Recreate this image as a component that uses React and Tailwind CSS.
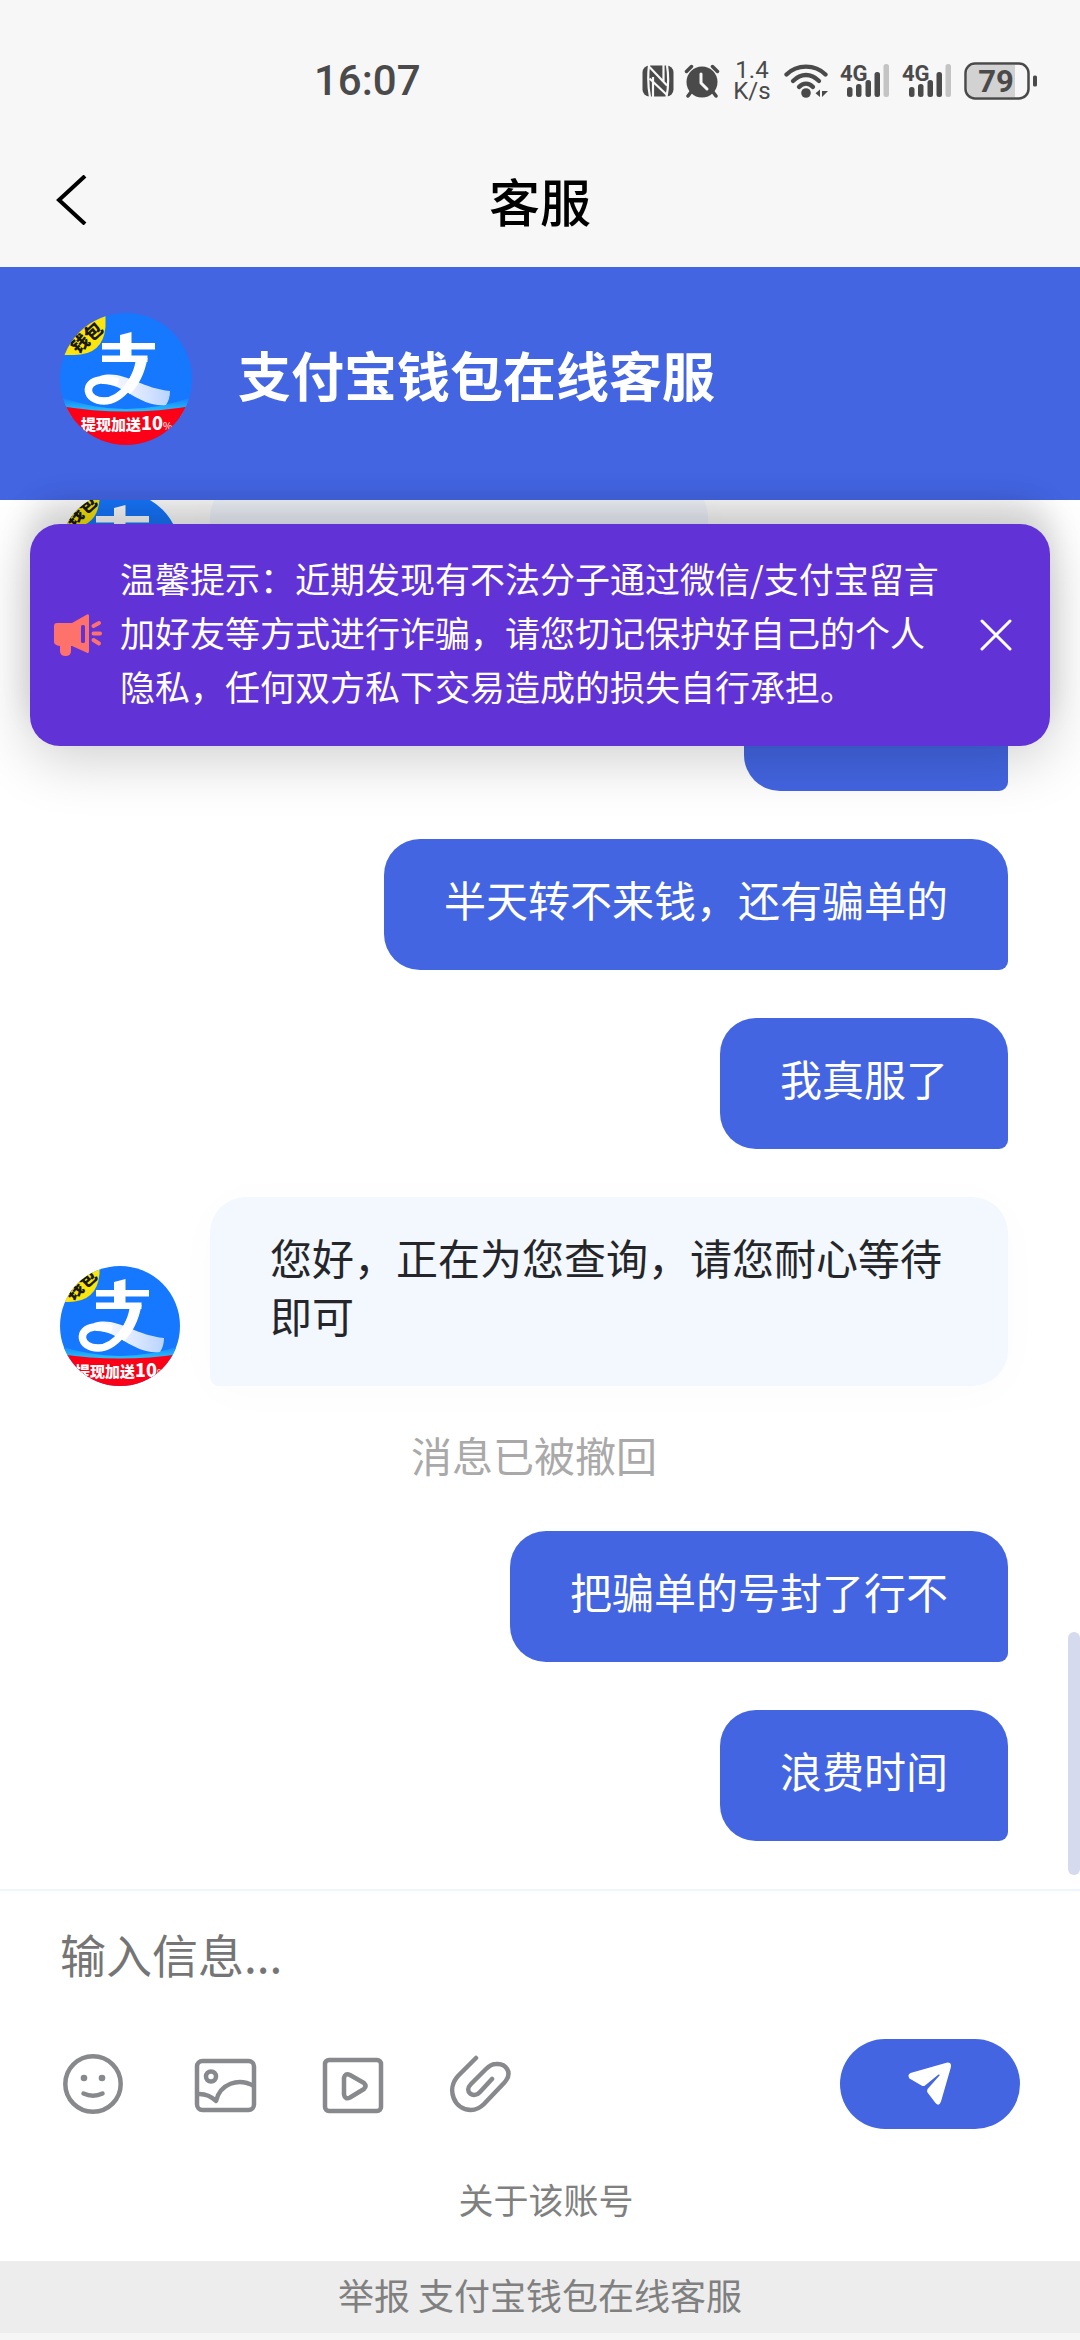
import React, { useState } from "react";

const messages = [
  { id: 1, from: "agent", text: "" },
  { id: 2, from: "me", text: "" },
  { id: 3, from: "me", text: "半天转不来钱，还有骗单的" },
  { id: 4, from: "me", text: "我真服了" },
  { id: 5, from: "agent", text: "您好，正在为您查询，请您耐心等待即可" },
  { id: 6, from: "system", text: "消息已被撤回" },
  { id: 7, from: "me", text: "把骗单的号封了行不" },
  { id: 8, from: "me", text: "浪费时间" },
];

const NfcIcon = () => (
  <svg viewBox="0 0 32 32" className="size-8" aria-hidden="true">
    <rect x="0.5" y="0.5" width="31" height="31" rx="7" fill="#4a4a4a" />
    <path d="M7 0 C6 9 6 22 8 32 M25 0 C26.500 10 26.500 22 24.500 32" fill="none" stroke="#f7f7f7" strokeWidth="2.200" />
    <path d="M7.500 2 L25 20.500 M7.500 13.500 L25 30 M11 12 V32 M21.500 0 V17" fill="none" stroke="#f7f7f7" strokeWidth="2.200" />
  </svg>
);

const AlarmIcon = () => (
  <svg viewBox="0 0 36 34" className="h-[34px] w-9" aria-hidden="true">
    <circle cx="18" cy="18" r="15.500" fill="#4a4a4a" />
    <path d="M2.500 7.500 L7.500 2.500 M33.500 7.500 L28.500 2.500 M7 28 L4 32 M29 28 L32 32" stroke="#4a4a4a" strokeWidth="3.500" strokeLinecap="round" />
    <path d="M17 10 V19 L23 25" fill="none" stroke="#f7f7f7" strokeWidth="3" strokeLinecap="round" strokeLinejoin="round" />
  </svg>
);

const WifiIcon = () => (
  <svg viewBox="0 0 46 34" className="h-[34px] w-[46px]" aria-hidden="true">
    <g fill="none" stroke="#4a4a4a" strokeWidth="4.300" strokeLinecap="round">
      <path d="M2.500 10.500 C13 0 31 0 41.500 10.500" />
      <path d="M9 17 C17 9 27 9 35 17" />
      <path d="M15 23 C19 18.500 25 18.500 29 23" />
    </g>
    <circle cx="22" cy="29" r="4.800" fill="#4a4a4a" />
    <path d="M36 25.500 V33 L31.500 29.300 Z M38 25.500 V33 L44 27 H38 Z" fill="#4a4a4a" />
  </svg>
);

const SignalIcon = () => (
  <svg viewBox="0 0 52 36" className="h-9 w-[52px] overflow-visible" aria-hidden="true">
    <text x="0" y="18" fontSize="22" fontWeight="700" fill="#4a4a4a" className="font-['Roboto',sans-serif]">4G</text>
    <g fill="#4a4a4a">
      <rect x="7" y="24" width="5.500" height="10" rx="2.500" />
      <rect x="16" y="21" width="5.500" height="13" rx="2.500" />
      <rect x="25.500" y="17" width="5.500" height="17" rx="2.500" />
      <rect x="34.500" y="9" width="5.500" height="25" rx="2.500" />
    </g>
    <rect x="43.500" y="1" width="5.500" height="33" rx="2.500" fill="#c4c4c4" />
  </svg>
);

const BatteryIcon = () => (
  <svg viewBox="0 0 74 38" className="h-[38px] w-[74px]" aria-hidden="true">
    <path d="M12 3 H51 V35 H12 Q3 35 3 26 V12 Q3 3 12 3 Z" fill="#d2d2d2" />
    <rect x="1.500" y="1.500" width="63" height="35" rx="9.500" fill="none" stroke="#4a4a4a" strokeWidth="2.500" />
    <rect x="69" y="13.500" width="4" height="11" rx="1.500" fill="#4a4a4a" />
    <text x="32" y="30" textAnchor="middle" fontSize="31" fontWeight="700" fill="#4a4a4a" className="font-['Roboto',sans-serif]">79</text>
  </svg>
);

// الصورة نفسها تُستخدم في الرأس وفي المحادثة مع اقتصاص مختلف
const Avatar = ({ uid, viewBox, className }) => (
  <svg viewBox={viewBox} className={`shrink-0 rounded-full ${className}`} role="img" aria-label="支付宝钱包">
    <defs>
      <linearGradient id={`${uid}-ribbon`} x1="0" y1="0" x2="1" y2="0">
        <stop offset="0" stopColor="#fff" />
        <stop offset="0.5" stopColor="#e3ecff" />
        <stop offset="1" stopColor="#b9d3ff" />
      </linearGradient>
      <linearGradient id={`${uid}-glow`} x1="0" y1="0" x2="0" y2="1">
        <stop offset="0" stopColor="#1677ff" />
        <stop offset="1" stopColor="#2ce0f5" />
      </linearGradient>
    </defs>
    <rect width="132" height="132" fill="#1677ff" />
    <path d="M0 84 Q66 108 132 84 V104 H0 Z" fill={`url(#${uid}-glow)`} />
    <path d="M0 93 Q66 104 132 93 V132 H0 Z" fill="#fb0016" />
    <path d="M40 63 C62 56 80 75 110 78 Q110 86 106 92 C80 95 64 70 42 71 Z" fill={`url(#${uid}-ribbon)`} />
    <path d="M81 46 C78 64 62 88 44 88 C25 88 23 69 40 67 C46 66.500 52 67.500 58 69" fill="none" stroke="#fff" strokeWidth="7.500" />
    <path d="M76 45 H87.500 C85 60 78 74 70 81 L63 75 C70 66 75 56 76 45 Z" fill="#fff" />
    <rect x="42" y="30" width="53" height="6.500" fill="#fff" />
    <rect x="42" y="42.500" width="45.500" height="6.500" fill="#fff" />
    <path d="M60 22 L71.500 19 V45 H60 Z" fill="#fff" />
    <path d="M45.500 0 V14 Q43 42 14 42 H0 V0 Z" fill="#fbe50d" />
    <g className="font-['Noto_Sans_CJK_SC',sans-serif]" fontWeight="900">
      <text x="27" y="31" textAnchor="middle" fontSize="18" fill="#191900" transform="rotate(-42 27 25)">钱包</text>
      <text x="21" y="117" fontSize="15" fill="#fff">
        提现加送
        <tspan fontSize="18">10</tspan>
        <tspan fontSize="10" fontWeight="400">%</tspan>
      </text>
    </g>
  </svg>
);

const HornIcon = () => (
  <svg viewBox="0 0 48 44" className="h-11 w-12 shrink-0" fill="#ff716b" aria-hidden="true">
    <path d="M3 10 H18 L33 1.500 Q35 0.500 35 3 V38 Q35 41 32.500 39.500 L18 33 H17 V38 Q17 43 11.500 43 Q6 43 6 38 V33 Q0 32 0 29 V13 Q0 10 3 10 Z" />
    <rect x="27" y="12" width="4" height="18" rx="1.500" fill="#6133d7" />
    <path d="M39.500 13 L45 10 M39.500 20.500 H46 M39.500 27 L45 30.500" stroke="#ff716b" strokeWidth="4" strokeLinecap="round" />
  </svg>
);

const CloseIcon = () => (
  <svg viewBox="0 0 32 32" className="size-8" aria-hidden="true">
    <path d="M2 2 L30 30 M30 2 L2 30" stroke="#fff" strokeWidth="3" strokeLinecap="round" />
  </svg>
);

const toolClass = "size-[72px] fill-none stroke-[#88898d]";

const tools = [
  {
    label: "表情",
    icon: (
      <svg viewBox="0 0 72 72" className={toolClass} strokeWidth="4.500" strokeLinecap="round">
        <circle cx="36" cy="36" r="27.700" />
        <path d="M26.500 45.500 Q36 50 45.500 45.500" />
        <circle cx="27" cy="30" r="3.300" className="fill-[#88898d] stroke-none" />
        <circle cx="45" cy="30" r="3.300" className="fill-[#88898d] stroke-none" />
      </svg>
    ),
  },
  {
    label: "图片",
    icon: (
      <svg viewBox="0 0 72 72" className={toolClass} strokeWidth="4.500">
        <rect x="12" y="13" width="57" height="49" rx="5.500" />
        <circle cx="26" cy="28.500" r="5" />
        <path d="M12 46 Q23 45 31 53 C35 36 53 29 69 38" strokeLinejoin="round" />
      </svg>
    ),
  },
  {
    label: "视频",
    icon: (
      <svg viewBox="0 0 72 72" className={toolClass} strokeWidth="4.500" strokeLinejoin="round">
        <rect x="12" y="12" width="56" height="51" rx="4" />
        <path d="M31 30 Q32 24.500 37 27 L51 35 Q54 38 51 41 L37 49.500 Q32 52 31 46.500 Z" />
      </svg>
    ),
  },
  {
    label: "附件",
    icon: (
      <svg viewBox="0 0 72 72" className={toolClass} strokeWidth="4.500" strokeLinecap="round">
        <path d="M35 10 L17 28 C5 41 13 62 30 62 C35 62 39 60 43 56 L63 35 C73 24 64 15 55 16 C51 16 48 18 45 21 L30 36 C22 44 33 51 39 44 L51 31" />
      </svg>
    ),
  },
];

const SendIcon = () => (
  <svg viewBox="0 0 44 44" className="size-11" fill="#fff" aria-hidden="true">
    <path d="M2.500 11 L38.500 0.700 Q44 0 42.800 5.500 L33 39.500 Q31 45 27.500 41 L19.500 30.500 Q18.500 28.500 20 26.500 L31.500 13.500 Q32 12 30.500 12.500 L17 23.500 Q15.500 24.500 13.500 23.500 L1.500 16.500 Q-1 13 2.500 11 Z" />
  </svg>
);

const Message = ({ message }) => {
  if (message.from === "system") {
    return <p className="self-center pb-2 text-[41px] leading-[41px] text-[#a9a9a9]">{message.text}</p>;
  }
  if (message.from === "agent") {
    return (
      <div className="flex items-end gap-[30px] self-stretch">
        <Avatar uid={`msg-${message.id}`} viewBox="6 6 120 120" className="size-[120px]" />
        <p className="min-h-[131px] min-w-[498px] rounded-[36px] rounded-bl-[9px] bg-[#f3f7fe] px-[60px] pt-[31px] pb-[42px] text-[42px] leading-[58px] text-[#242629] shadow-[0_6px_48px_rgba(0,0,0,0.02)]">
          {message.text}
        </p>
      </div>
    );
  }
  return (
    <p className="min-h-[131px] min-w-[264px] self-end rounded-[36px] rounded-br-[9px] bg-[#4365e2] px-[60px] pt-[31px] pb-[42px] text-[42px] leading-[58px] text-white">
      {message.text}
    </p>
  );
};

export default function App() {
  const [showTip, setShowTip] = useState(true);
  const [draft, setDraft] = useState("");

  return (
    <div className="flex h-screen flex-col bg-white font-['Noto_Sans_CJK_SC',sans-serif]">
      {/* شريط الحالة + عنوان الصفحة */}
      <div className="bg-[#f7f7f7]">
        <div className="flex items-center justify-between pt-[54px] pr-[42px] pl-[314px] text-[#4a4a4a]">
          <span className="font-['Roboto',sans-serif] text-[42px] leading-[54px] font-medium">16:07</span>
          <div className="flex items-center gap-2.5">
            <NfcIcon />
            <AlarmIcon />
            <div className="w-11 text-center font-['Roboto',sans-serif] text-[24px] leading-[21px]">
              <div>1.4</div>
              <div>K/s</div>
            </div>
            <WifiIcon />
            <SignalIcon />
            <SignalIcon />
            <BatteryIcon />
          </div>
        </div>
        <div className="grid grid-cols-3 items-center px-[54px] pt-[56px] pb-[31px]">
          <button type="button" aria-label="返回" className="justify-self-start">
            <svg viewBox="0 0 34 50" className="h-[50px] w-[34px]">
              <path d="M31 1 L5 25 L31 49" fill="none" stroke="#000" strokeWidth="4" />
            </svg>
          </button>
          <h1 className="text-center text-[51px] leading-[72px] font-medium text-black">客服</h1>
        </div>
      </div>

      <header className="flex items-center gap-[46px] bg-[#4365e2] px-[60px] pt-[46px] pb-[55px]">
        <Avatar uid="head" viewBox="0 0 132 132" className="size-[132px]" />
        <h2 className="pb-2.5 text-[53px] leading-[72px] font-bold text-white">支付宝钱包在线客服</h2>
      </header>

      <main className="relative min-h-0 flex-1">
        <div className="flex h-full flex-col justify-end gap-12 overflow-hidden pr-[72px] pb-12 pl-[60px]">
          {messages.map((message) => (
            <Message key={message.id} message={message} />
          ))}
        </div>
        <div className="absolute right-0 bottom-[14px] h-[243px] w-3 rounded-full bg-[#d5daee]" />

        {showTip && (
          <div className="absolute inset-x-[30px] top-6 flex items-center gap-[18px] rounded-[30px] bg-[#6133d7] pr-[38px] pl-6 shadow-[0_-24px_30px_rgba(0,0,0,0.13),0_12px_60px_rgba(0,0,0,0.2)]">
            <HornIcon />
            <p className="flex-1 pt-[27px] pb-[33px] text-[35px] leading-[54px] text-white">
              温馨提示：近期发现有不法分子通过微信/支付宝留言加好友等方式进行诈骗，请您切记保护好自己的个人隐私，任何双方私下交易造成的损失自行承担。
            </p>
            <button type="button" aria-label="关闭" className="ml-3" onClick={() => setShowTip(false)}>
              <CloseIcon />
            </button>
          </div>
        )}
      </main>

      <form className="border-t-2 border-[#eff5fc] pt-[30px]" onSubmit={(e) => e.preventDefault()}>
        <div className="px-[60px]">
          <input
            type="text"
            aria-label="输入信息"
            placeholder="输入信息..."
            value={draft}
            onChange={(e) => setDraft(e.target.value)}
            className="h-[68px] w-full pb-1 text-[46px] text-[#242629] outline-none placeholder:text-[#757575]"
          />
        </div>
        <div className="mt-[50px] flex items-center justify-between pr-[60px] pl-[57px]">
          <div className="flex gap-14">
            {tools.map((tool) => (
              <button key={tool.label} type="button" aria-label={tool.label}>
                {tool.icon}
              </button>
            ))}
          </div>
          <button type="submit" aria-label="发送" className="flex h-[90px] w-[180px] items-center justify-center rounded-full bg-[#4365e2]">
            <SendIcon />
          </button>
        </div>
      </form>

      <footer className="bg-[#f6f6f6] pb-[7px] text-center text-[#808080]">
        <div className="bg-white pt-[37px] pb-[29px] pl-3 text-[35px] leading-[66px]">
          <a href="#about">关于该账号</a>
        </div>
        <div className="bg-[#ededed] pb-1.5 text-[36px] leading-[66px]">
          <a href="#report">举报 支付宝钱包在线客服</a>
        </div>
      </footer>
    </div>
  );
}
